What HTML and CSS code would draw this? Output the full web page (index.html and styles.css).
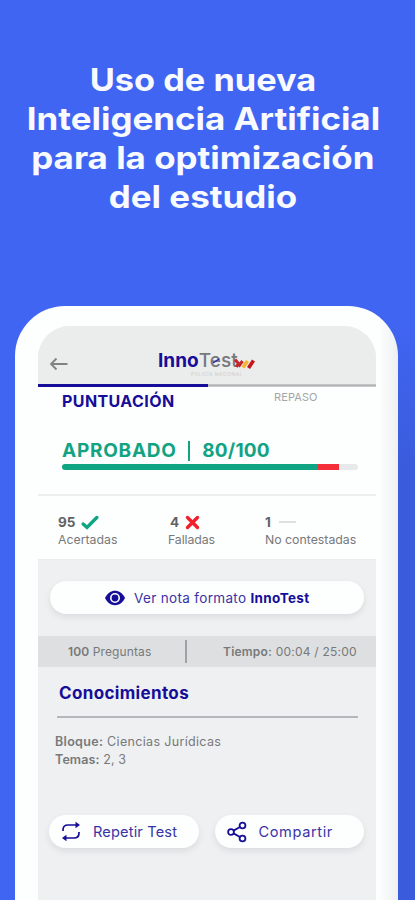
FILE: index.html
```html
<!DOCTYPE html>
<html lang="es">
<head>
<meta charset="utf-8">
<meta name="viewport" content="width=device-width, initial-scale=1">
<title>InnoTest</title>
<link rel="stylesheet" href="styles.css">
</head>
<body>
<h1 class="headline"><span class="l1">Uso de nueva</span><span class="l2">Inteligencia Artificial</span><span class="l3">para la optimización</span><span class="l4">del estudio</span></h1>
<main class="phone">
  <div class="screen">
    <header class="topbar">
      <svg class="back" width="20" height="14" viewBox="0 0 20 14"><path d="M7.500 1.500 2 7l5.500 5.500M2 7h16.500" fill="none" stroke="#808283" stroke-width="1.800"/></svg>
      <div class="logo">
        <div class="wordmark"><span class="inno">Inno</span><span class="test">Test</span></div>
        <small class="tagline">POLICÍA NACIONAL</small>
        <svg class="flag" width="22" height="13" viewBox="0 0 22 13"><g fill="none" stroke-width="3"><path d="M1 2.500l3.500 4L2.500 10" stroke="#c5262b"/><path d="M4.500 9.500l4-5.500" stroke="#c5262b"/><path d="M9 10.500l4.500-6.500" stroke="#f6b52e" stroke-width="3.600"/><path d="M14.500 11l5-7.500" stroke="#c4161c" stroke-width="3.600"/></g></svg>
        <svg class="pen" width="8" height="6" viewBox="0 0 8 6"><path d="M1 5l6-4" stroke="#2b2bb0" stroke-width="1.500"/></svg>
      </div>
    </header>
    <div class="tabline"><i></i></div>
    <section class="score">
      <nav class="tabs"><b>PUNTUACIÓN</b><span>REPASO</span></nav>
      <h2 class="result"><span>APROBADO</span><i></i><span class="pts">80/100</span></h2>
      <div class="progress"><i class="ok"></i><i class="ko"></i></div>
    </section>
    <section class="stats">
      <div class="stat s1"><div class="num"><b>95</b><svg width="18" height="15" viewBox="0 0 18 15"><path d="M2.200 9l3.800 3.500L15.800 2.500" fill="none" stroke="#0fa582" stroke-width="3.400" stroke-linecap="round"/></svg></div><span>Acertadas</span></div>
      <div class="stat s2"><div class="num"><b>4</b><svg width="15" height="15" viewBox="0 0 15 15"><path d="M2.500 2.500l10 10M12.500 2.500l-10 10" fill="none" stroke="#f2202a" stroke-width="3.400" stroke-linecap="round"/></svg></div><span>Falladas</span></div>
      <div class="stat s3"><div class="num"><b>1</b><i></i></div><span>No contestadas</span></div>
    </section>
    <a class="pill note"><svg width="22" height="16" viewBox="0 0 22 16"><path d="M1 8C3.500 3 7 .8 11 .8S18.500 3 21 8c-2.500 5-6 7.200-10 7.200S3.500 13 1 8z" fill="#160d98"/><circle cx="11" cy="8" r="4.200" fill="none" stroke="#fff" stroke-width="1.600"/></svg><span>Ver nota formato <b>InnoTest</b></span></a>
    <section class="meta"><span class="questions"><b>100</b> Preguntas</span><i></i><span class="time"><b>Tiempo:</b> 00:04 / 25:00</span></section>
    <section class="knowledge">
      <h3>Conocimientos</h3>
      <p class="p1"><b>Bloque:</b> Ciencias Jurídicas</p>
      <p class="p2"><b>Temas:</b> 2, 3</p>
    </section>
    <div class="actions">
      <a class="pill repeat"><svg width="20" height="21" viewBox="0 0 20 21"><g fill="none" stroke="#160d98" stroke-width="1.700"><path d="M2 10V9Q2 4 7 4H16"/><path d="M18 11v1q0 5-5 5H4"/></g><path d="M14.500.8 19 4l-4.500 3.200zM5.500 13.800 1 17l4.500 3.200z" fill="#160d98"/></svg><span>Repetir Test</span></a>
      <a class="pill share"><svg width="20" height="22" viewBox="0 0 20 22"><g fill="none" stroke="#160d98" stroke-width="1.800"><circle cx="4" cy="11" r="2.900"/><circle cx="15.500" cy="4.500" r="2.900"/><circle cx="15.500" cy="17.500" r="2.900"/><path d="M6.500 9.600 13 6M6.500 12.400 13 16"/></g></svg><span>Compartir</span></a>
    </div>
  </div>
</main>
</body>
</html>
```

FILE: styles.css
```css
* { box-sizing: border-box; }
html, body { height: 100%; }
body {
  margin: 0;
  overflow: hidden;
  font-family: Inter, sans-serif;
  background:
    linear-gradient(#4065f2 0, #4065f2 320px, rgba(64, 101, 242, 0) 470px),
    linear-gradient(90deg, #4065f2 0, #4065f2 15px, #3a5bdb 390px);
  color: #77797b;
  white-space: nowrap;
}
h1, h2, h3, p { margin: 0; }
.headline {
  height: 306px;
  padding-top: 60px;
  padding-right: 9px;
  display: flex;
  flex-direction: column;
  align-items: center;
  font-size: 31.5px;
  line-height: 39px;
  font-weight: 700;
  color: #f8faff;
}
.headline span { transform: scaleX(1.108); }
.headline .l1 { transform: scaleX(1.09); }
.phone {
  width: 383px;
  height: 594px;
  margin-left: 15px;
  padding: 20px 22px 0 23px;
  border-radius: 50px 50px 0 0;
  background: linear-gradient(90deg, #fdfefe 0, #fdfefe 364px, #edf0f2 100%);
}
.screen {
  height: 574px;
  border-radius: 32px 32px 0 0;
  overflow: hidden;
  background: #eef0f1;
}
.topbar { height: 58px; display: flex; background: #ebeded; }
.back { margin: 31px 0 0 11px; }
.logo { position: relative; margin: 24px 0 0 89px; width: 100px; }
.wordmark { font-size: 19px; line-height: 21px; display: flex; }
.inno { font-weight: 700; color: #160d98; }
.test { font-weight: 500; color: #77797d; letter-spacing: 0.1px; }
.tagline { display: block; margin: 1px 0 0 33px; font-size: 4.5px; line-height: 5px; letter-spacing: 0.6px; color: #c8cacc; }
.flag { position: absolute; left: 76px; top: 7px; }
.pen { position: absolute; left: 54px; top: 8px; }
.tabline { height: 3px; background: linear-gradient(#d0d2d3 0, #b2b4b6 1px, #b2b4b6 2px, #dddfe0 3px); }
.tabline i { display: block; height: 3px; width: 170px; background: #160d98; }
.score { height: 109px; padding: 0 18px 0 24px; background: #fdfefe; border-bottom: 2px solid #eceeef; }
.tabs { height: 50px; display: flex; }
.tabs b { width: 212px; font-size: 16px; line-height: 29px; letter-spacing: 0.4px; color: #160d98; }
.tabs span { font-size: 11px; line-height: 21px; color: #a3a5a7; letter-spacing: 0.1px; }
.result { display: flex; align-items: center; height: 27px; font-size: 19px; line-height: 27px; color: #12a383; letter-spacing: 0.75px; }
.result i { width: 2.500px; height: 20px; margin: 0 12px 0 11px; background: #12a383; }
.result .pts { letter-spacing: 0.2px; }
.progress { display: flex; height: 6px; border-radius: 3px; overflow: hidden; background: #e8e9ea; width: 296px; }
.ok { width: 256px; background: #0fa582; }
.ko { width: 21px; background: #f52f3a; }
.stats { height: 64px; display: flex; padding: 17px 0 0 20px; background: #fdfefe; border-bottom: 1px solid #e9ebec; }
.stat { font-size: 12.300px; line-height: 17px; }
.s1 { width: 110px; }
.s2 { width: 97px; }
.s2 > span { letter-spacing: -0.1px; }
.num { height: 18px; display: flex; align-items: center; gap: 6px; font-size: 13.500px; color: #606264; }
.num i { width: 17px; height: 2px; margin-left: 2px; background: #dedfe0; }
.s2 .num { padding-left: 2px; }
.pill {
  display: flex;
  align-items: center;
  height: 33px;
  border-radius: 17px;
  background: #fdfefe;
  box-shadow: 0 3px 6px rgba(70, 80, 90, .12);
  color: #3a33a6;
}
.note { margin: 21px 12px 22px; padding-left: 54px; gap: 8px; font-size: 13.500px; letter-spacing: 0.33px; }
.note b { color: #160d98; }
.meta { height: 31px; display: flex; align-items: center; padding-left: 30px; background: #dddfe0; font-size: 12px; letter-spacing: 0.12px; }
.meta b, .knowledge p b { font-weight: 600; }
.questions { width: 117px; }
.meta i { width: 2px; height: 23px; background: #a0a3a5; }
.time { margin-left: 36px; letter-spacing: 0.22px; }
.knowledge { height: 147px; padding: 13px 18px 0 17px; font-size: 12.500px; line-height: 18px; letter-spacing: 0.33px; }
.knowledge h3 { height: 38px; margin: 0 0 15px 2px; padding-left: 2px; font-size: 17px; line-height: 27px; letter-spacing: 0.35px; color: #160d98; border-bottom: 2px solid #b4b8bb; }
.p2 { letter-spacing: 0.1px; }
.actions { display: flex; gap: 16px; padding: 1px 0 0 11px; }
.actions .pill { width: 149.500px; font-size: 14.600px; letter-spacing: 0.15px; }
.repeat { padding-left: 12px; gap: 12px; }
.share { padding-left: 12px; gap: 12px; }
.actions .share { letter-spacing: 0.6px; }
```
